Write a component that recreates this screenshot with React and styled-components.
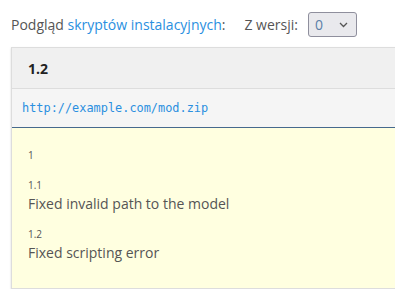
import React from "react";
import styled, { createGlobalStyle } from "styled-components";

const Global = createGlobalStyle`
  html, body { margin: 0; padding: 0; background: #fff; }
  body { font-family: "Open Sans", "Noto Sans", sans-serif; color: #555; }
`;

const Page = styled.div`
  padding: 12px 0 0 11px;
  width: 420px;
`;

const TopRow = styled.div`
  display: flex;
  align-items: center;
  font-size: 14px;
  height: 25px;
`;

const Label = styled.span`
  color: #555;
  margin-right: ${(p) => p.$gap || 0}px;
`;

const Link = styled.a`
  color: #2a8fe0;
  text-decoration: none;
`;

const SelectBox = styled.div`
  box-sizing: border-box;
  width: 49px;
  height: 25px;
  margin-left: 10px;
  border: 1px solid #8f8f9d;
  border-radius: 3px;
  background: #e9e9ed;
  display: flex;
  align-items: center;
  justify-content: space-between;
  padding: 0 8px 0 6px;
  color: #5b7fa8;
  font-size: 14px;
`;

const Panel = styled.div`
  margin-top: 10px;
  border: 1px solid #ddd;
  border-right: none;
  box-shadow: 0 1px 2px rgba(0, 0, 0, 0.15);
`;

const Header = styled.div`
  background: #f0f0f0;
  height: 40px;
  display: flex;
  align-items: center;
  padding-left: 16px;
  font-weight: 700;
  font-size: 14px;
  color: #222;
  border-bottom: 1px solid #ddd;
`;

const UrlRow = styled.div`
  background: #f5f5f5;
  height: 38px;
  display: flex;
  align-items: center;
  padding-left: 10px;
  font-family: "DejaVu Sans Mono", monospace;
  font-size: 11.9px;
  color: #2a8fe0;
  border-bottom: 1px solid #46698d;
`;

const Body = styled.div`
  background: #ffffe0;
  padding: 19px 16px 24px;
`;

const Version = styled.div`
  font-size: 10px;
  color: #555;
  line-height: 16px;
  margin-top: ${(p) => p.$top || 0}px;
`;

const Note = styled.div`
  font-size: 14px;
  color: #555;
  line-height: 22px;
`;

export default function App() {
  return (
    <>
      <Global />
      <Page>
        <TopRow>
          <Label $gap={19}>
            Podgląd <Link href="#">skryptów instalacyjnych</Link>:
          </Label>
          <Label>Z wersji:</Label>
          <SelectBox>
            <span>0</span>
            <svg width="9" height="6" viewBox="0 0 9 6">
              <path d="M1 1l3.5 3.5L8 1" fill="none" stroke="#555" strokeWidth="1.3" />
            </svg>
          </SelectBox>
        </TopRow>
        <Panel>
          <Header>1.2</Header>
          <UrlRow>http://example.com/mod.zip</UrlRow>
          <Body>
            <Version>1</Version>
            <Version $top={14}>1.1</Version>
            <Note>Fixed invalid path to the model</Note>
            <Version $top={11}>1.2</Version>
            <Note>Fixed scripting error</Note>
          </Body>
        </Panel>
      </Page>
    </>
  );
}
